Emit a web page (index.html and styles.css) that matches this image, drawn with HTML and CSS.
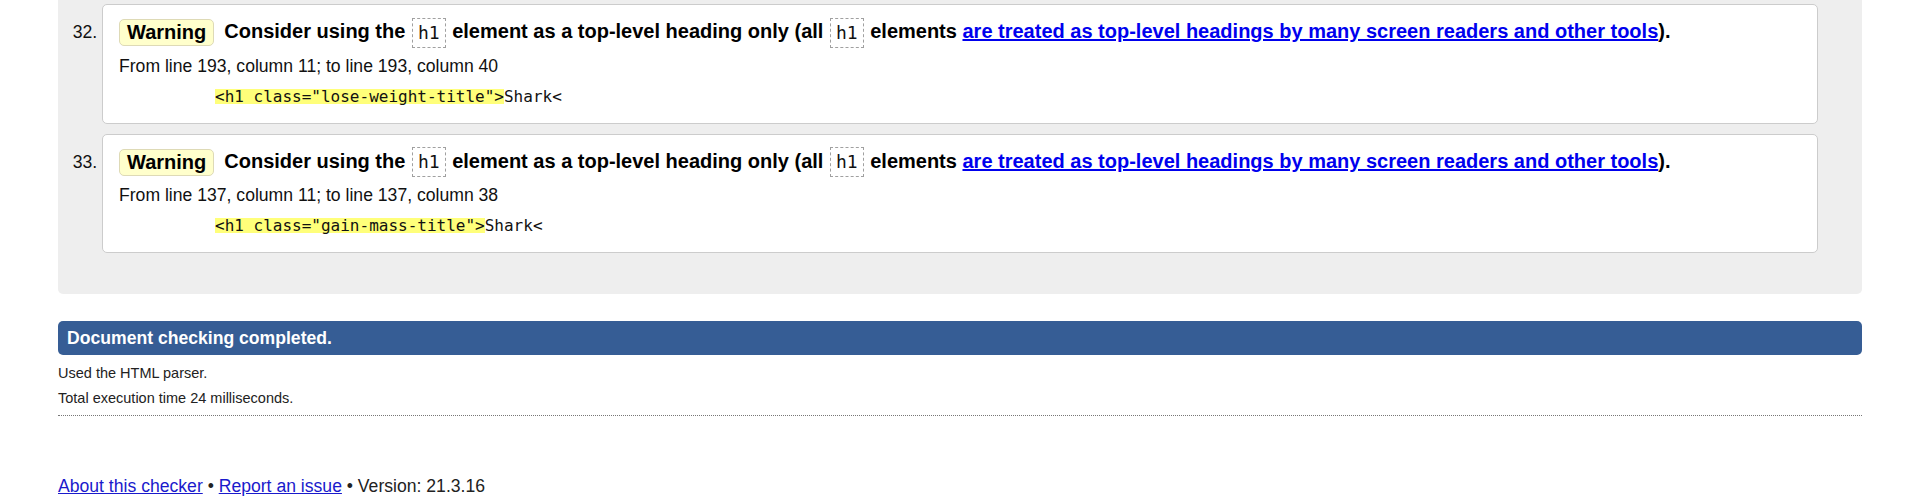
FILE: index.html
```html
<!DOCTYPE html>
<html lang="en">
<head>
<meta charset="utf-8">
<title>Nu Html Checker</title>
<link rel="stylesheet" href="styles.css">
</head>
<body>
<div class="results">
  <ol class="messages" start="32">
    <li class="msg">
      <p class="head"><span class="badge">Warning</span><span class="txt">Consider using the <code class="tag">h1</code> element as a top-level heading only (all <code class="tag">h1</code> elements <a href="#">are treated as top-level headings by many screen readers and other tools</a>).</span></p>
      <p class="loc">From line 193, column 11; to line 193, column 40</p>
      <p class="extract"><code><b class="hl">&lt;h1 class="lose-weight-title"&gt;</b>Shark&lt;</code></p>
    </li>
    <li class="msg">
      <p class="head"><span class="badge">Warning</span><span class="txt">Consider using the <code class="tag">h1</code> element as a top-level heading only (all <code class="tag">h1</code> elements <a href="#">are treated as top-level headings by many screen readers and other tools</a>).</span></p>
      <p class="loc">From line 137, column 11; to line 137, column 38</p>
      <p class="extract"><code><b class="hl">&lt;h1 class="gain-mass-title"&gt;</b>Shark&lt;</code></p>
    </li>
  </ol>
</div>
<p class="done">Document checking completed.</p>
<div class="details">
  <p class="info">Used the HTML parser.</p>
  <p class="info">Total execution time 24 milliseconds.</p>
</div>
<p class="footer"><a href="#">About this checker</a> • <a href="#">Report an issue</a> • Version: 21.3.16</p>
</body>
</html>
```

FILE: styles.css
```css
html, body {
  margin: 0;
  background: #fff;
}
body {
  padding: 0 58px;
  font-family: "Liberation Sans", Arial, sans-serif;
  font-size: 17.6px;
  color: #000;
}
a {
  color: #0000ee;
  text-decoration: underline;
}
.results {
  background: #eeeeee;
  border-radius: 0 0 5px 5px;
  padding: 4px 44px 41px 44px;
}
.messages {
  margin: 0;
  padding: 0;
  list-style: decimal outside;
}
.msg {
  background: #fff;
  border: 1px solid #cccccc;
  border-radius: 5px;
  padding: 10px 16px 19px 16px;
  margin: 0 0 10px 0;
  color: #111;
}
.msg:last-child {
  margin-bottom: 0;
}
.msg::marker {
  font-family: "Liberation Sans", Arial, sans-serif;
  font-size: 17.6px;
  color: #111;
}
.head {
  margin: 0;
  font-size: 20px;
  line-height: 32px;
  font-weight: bold;
  color: #000;
}
.badge {
  display: inline-block;
  vertical-align: middle;
  line-height: 25px;
  padding: 0 7px;
  margin-right: 10px;
  background: #ffffcc;
  border: 1px solid #dedab6;
  border-radius: 5px;
}
.tag {
  display: inline-block;
  vertical-align: middle;
  font-family: "DejaVu Sans Mono", "Liberation Mono", monospace;
  font-weight: normal;
  font-size: 18px;
  line-height: 28px;
  padding: 0 5px;
  margin: 0 1px;
  border: 1px dashed #a0a0a0;
  color: #111;
}
.head a {
  color: #0000ee;
}
.loc {
  margin: 7px 0 0 0;
  line-height: 22px;
}
.extract {
  margin: 12px 0 0 0;
  padding-left: 96px;
  line-height: 15px;
  font-family: "DejaVu Sans Mono", "Liberation Mono", monospace;
  font-size: 16px;
}
.extract code {
  font-family: inherit;
  font-size: inherit;
}
.hl {
  display: inline-block;
  font-weight: normal;
  background: #ffff7a;
  line-height: 15px;
}
.done {
  margin: 27px 0 0 0;
  background: #365d95;
  color: #fff;
  font-weight: bold;
  font-size: 17.6px;
  line-height: 34px;
  padding: 0 9px;
  border-radius: 5px;
}
.details {
  margin-top: 6px;
  border-bottom: 1px dotted #777;
  padding-bottom: 4px;
}
.info {
  margin: 0;
  font-size: 14.5px;
  line-height: 25px;
  color: #222;
}
.footer {
  margin: 59px 0 0 0;
  line-height: 22px;
  color: #222;
}
.footer a {
  color: #1a1acc;
}
```
